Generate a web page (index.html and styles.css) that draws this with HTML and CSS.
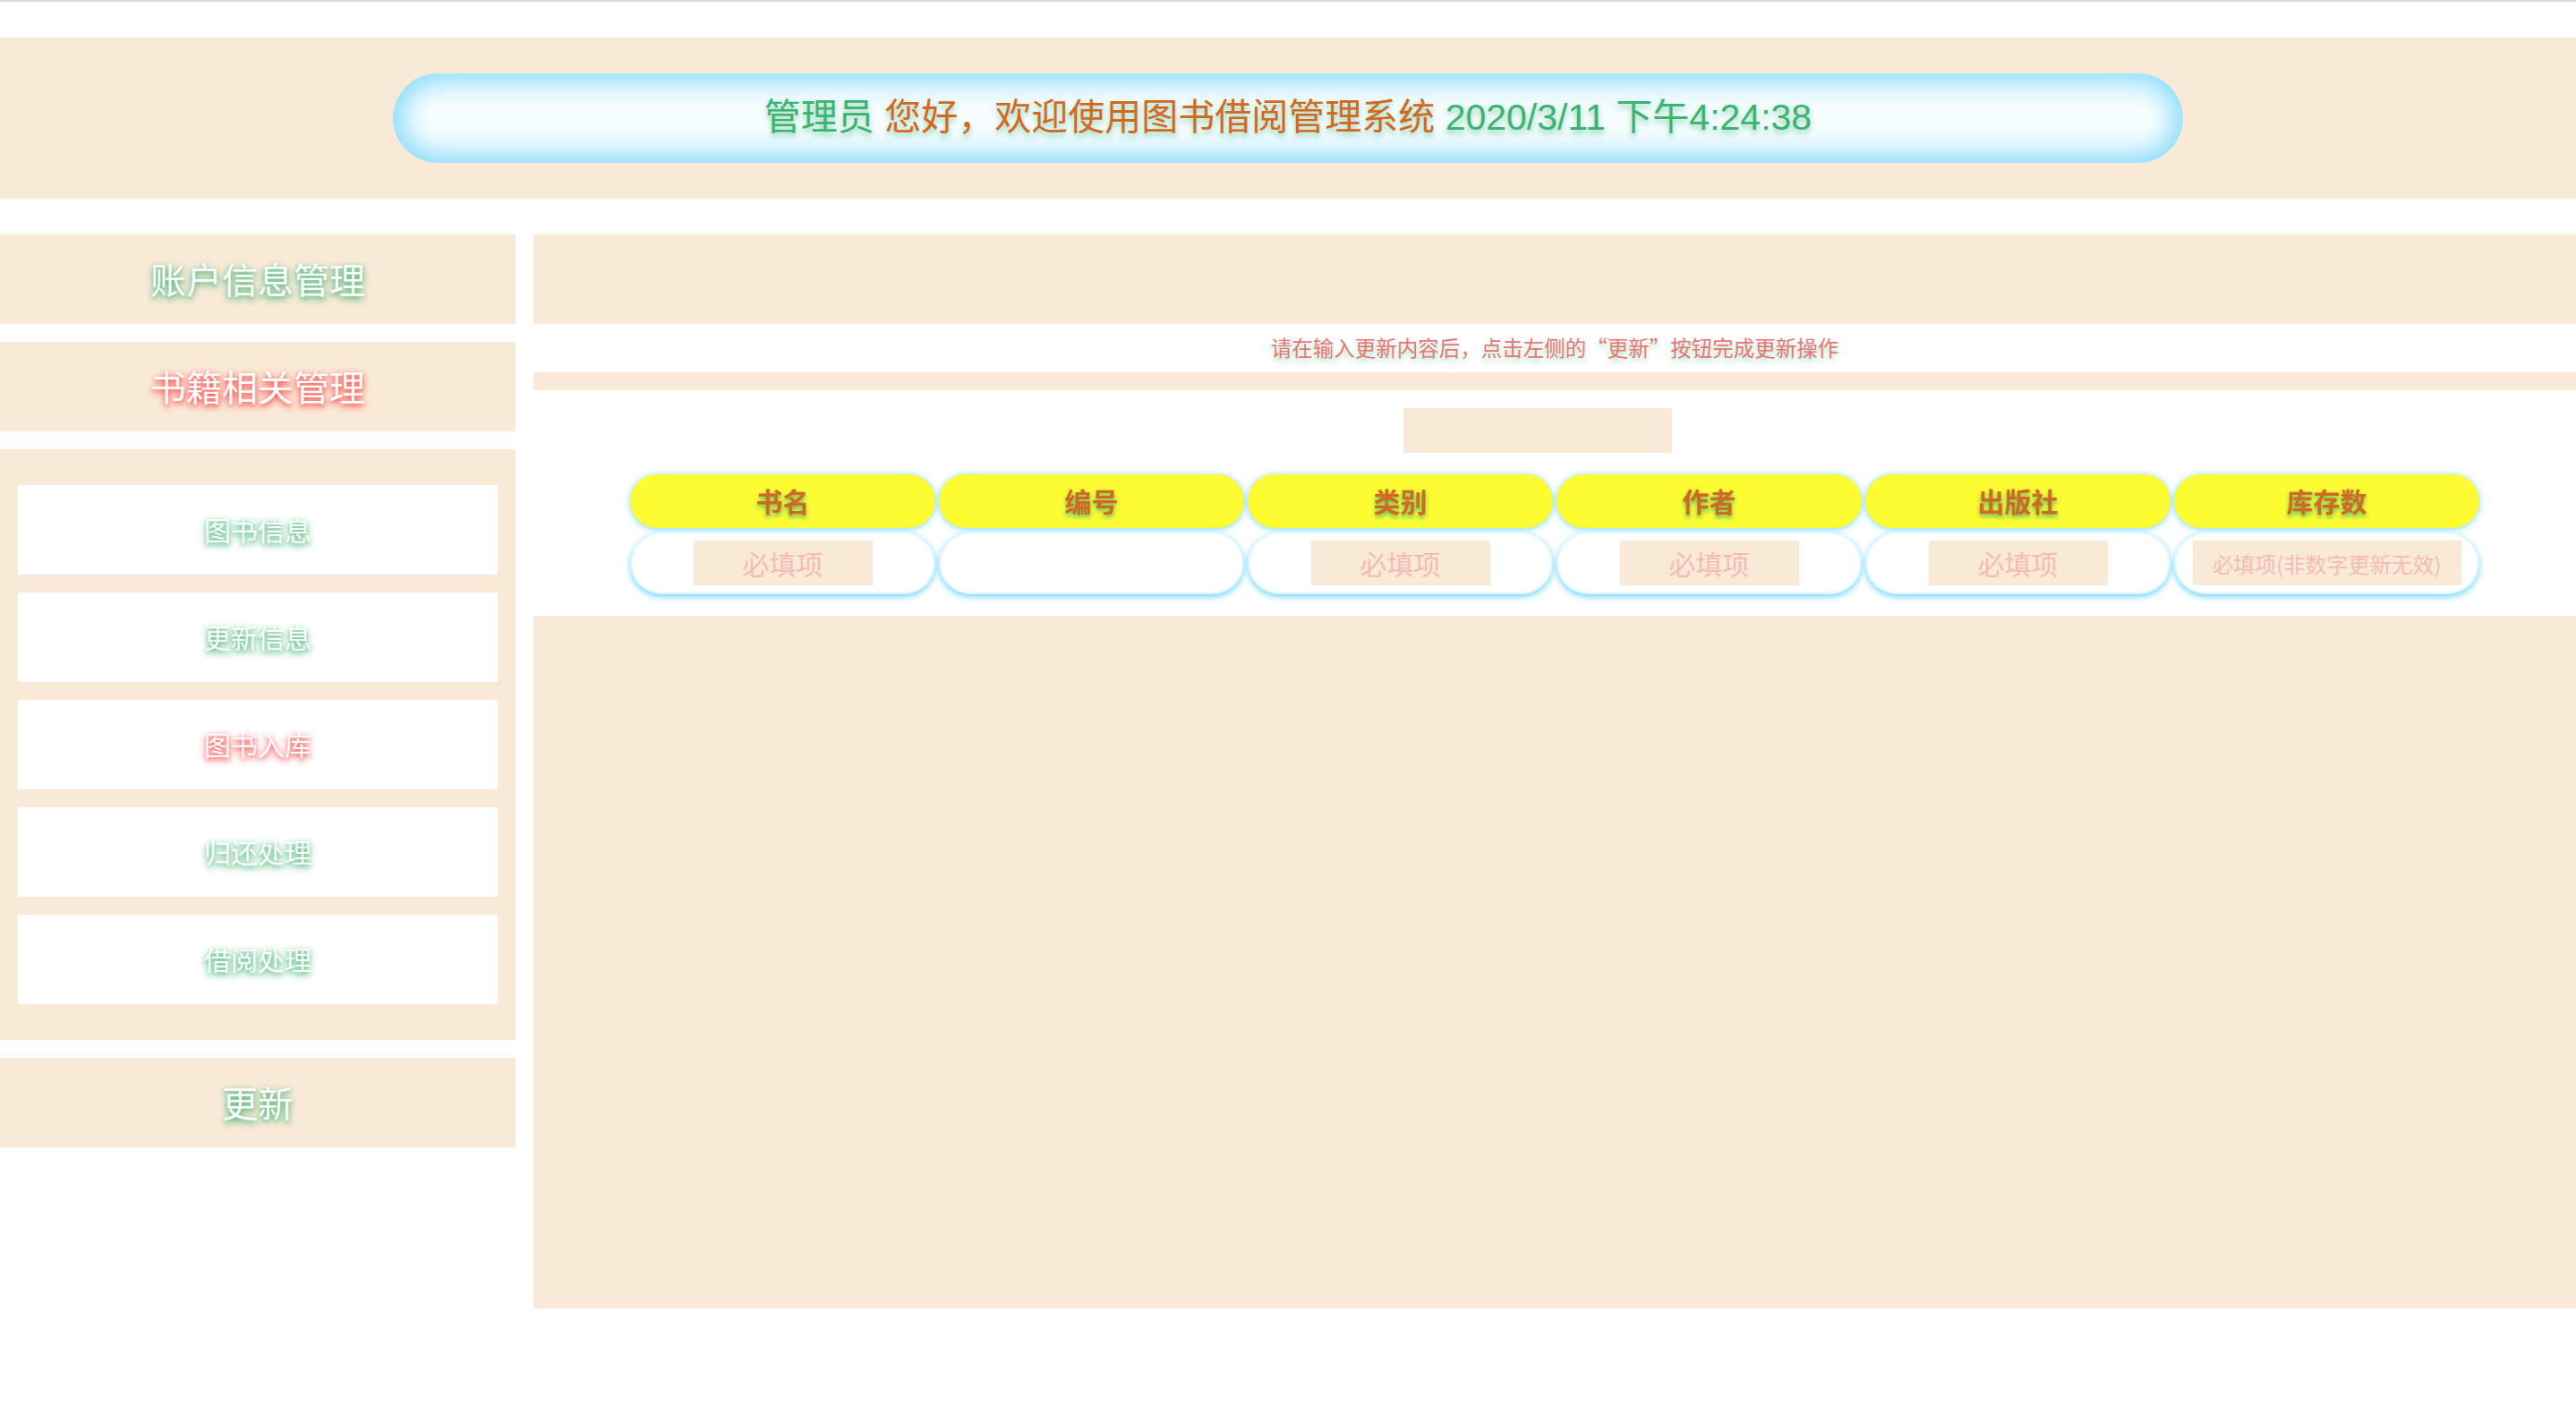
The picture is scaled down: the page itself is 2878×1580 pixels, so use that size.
FILE: index.html
```html
<!DOCTYPE html>
<html lang="zh-CN">
<head>
<meta charset="utf-8">
<title>图书借阅管理系统</title>
<link rel="stylesheet" href="styles.css">
</head>
<body>
<header class="topbar">
  <div class="welcome"><span class="green">管理员</span> <span class="orange">您好，欢迎使用图书借阅管理系统</span> <span class="green">2020/3/11 下午4:24:38</span></div>
</header>
<div class="layout">
  <aside class="sidebar">
    <div class="menu-head glow-green">账户信息管理</div>
    <div class="menu-head glow-red">书籍相关管理</div>
    <div class="submenu">
      <div class="sub-item glow-green">图书信息</div>
      <div class="sub-item glow-green">更新信息</div>
      <div class="sub-item glow-red">图书入库</div>
      <div class="sub-item glow-green">归还处理</div>
      <div class="sub-item glow-green">借阅处理</div>
    </div>
    <div class="menu-head glow-green">更新</div>
  </aside>
  <main class="content">
    <div class="blank-top"></div>
    <p class="hint">请在输入更新内容后，点击左侧的“更新”按钮完成更新操作</p>
    <div class="bar"></div>
    <div class="search-row"><input class="search" type="text"></div>
    <div class="book-grid">
      <div class="head-cell">书名</div>
      <div class="head-cell">编号</div>
      <div class="head-cell">类别</div>
      <div class="head-cell">作者</div>
      <div class="head-cell">出版社</div>
      <div class="head-cell">库存数</div>
      <div class="input-cell"><input class="field" type="text" placeholder="必填项"></div>
      <div class="input-cell"><input class="field field-plain" type="text"></div>
      <div class="input-cell"><input class="field" type="text" placeholder="必填项"></div>
      <div class="input-cell"><input class="field" type="text" placeholder="必填项"></div>
      <div class="input-cell"><input class="field" type="text" placeholder="必填项"></div>
      <div class="input-cell"><input class="field field-wide" type="text" placeholder="必填项(非数字更新无效)"></div>
    </div>
    <div class="blank-bottom"></div>
  </main>
</div>
</body>
</html>
```
FILE: styles.css
```css
* {
  box-sizing: border-box;
}

html, body {
  margin: 0;
  padding: 0;
  background: #ffffff;
}

body {
  border-top: 2px solid #dcdce2;
  font-family: "Liberation Sans", "Noto Sans CJK SC", sans-serif;
}

.topbar {
  margin-top: 40px;
  background: #f9ead8;
  padding: 40px 0;
}

.welcome {
  width: 2000px;
  height: 100px;
  margin: 0 auto;
  border-radius: 50px;
  background: #f6fdff;
  box-shadow: inset 0 0 30px 9px #86d9fa;
  text-align: center;
  line-height: 98px;
  font-size: 41px;
  white-space: pre;
  text-shadow: 0 4px 6px rgba(60, 179, 113, 0.55);
}

.green {
  color: #3cb371;
}

.orange {
  color: #d2691e;
}

.layout {
  margin-top: 40px;
  display: flex;
  gap: 20px;
}

.sidebar {
  width: 576px;
  flex: none;
  display: flex;
  flex-direction: column;
  gap: 20px;
}

.menu-head {
  height: 100px;
  background: #f9ead8;
  display: flex;
  align-items: center;
  justify-content: center;
  padding-bottom: 2px;
  color: #ffffff;
  font-size: 40px;
  font-family: "Noto Sans CJK SC", sans-serif;
}

.submenu {
  background: #f9ead8;
  padding: 40px 20px;
  display: flex;
  flex-direction: column;
  gap: 20px;
}

.sub-item {
  height: 100px;
  background: #ffffff;
  display: flex;
  align-items: center;
  justify-content: center;
  padding-bottom: 2px;
  color: #ffffff;
  font-size: 30px;
  font-family: "Noto Sans CJK SC", sans-serif;
}

.glow-green {
  text-shadow: 0 3px 8px #3cb371, 0 2px 4px rgba(60, 179, 113, 0.5);
}

.glow-red {
  text-shadow: 0 3px 8px #ff3c3c, 0 2px 4px rgba(255, 60, 60, 0.5);
}

.content {
  flex: 1;
  display: flex;
  flex-direction: column;
}

.blank-top {
  height: 100px;
  background: #f9ead8;
}

.hint {
  margin: 0;
  height: 54px;
  line-height: 52px;
  text-align: center;
  font-size: 23.5px;
  font-family: "Noto Sans CJK SC", sans-serif;
  color: #e87676;
  text-shadow: 0 4px 6px rgba(60, 179, 113, 0.45);
}

.bar {
  height: 20px;
  background: #f9ead8;
}

.search-row {
  margin-top: 20px;
  display: flex;
  justify-content: center;
}

.search {
  width: 300px;
  height: 50px;
  margin-right: 38px;
  border: none;
  outline: none;
  background: #f9ead8;
}

.book-grid {
  margin: 24px 0;
  display: grid;
  grid-template-columns: repeat(6, 341px);
  grid-template-rows: 60px 70px;
  column-gap: 4px;
  row-gap: 4px;
  justify-content: center;
}

.head-cell {
  background: #fdfc33;
  border-radius: 30px;
  box-shadow: 0 1px 7px #74d6fc;
  display: flex;
  align-items: center;
  justify-content: center;
  padding-bottom: 2px;
  font-size: 30px;
  font-weight: bold;
  font-family: "Noto Sans CJK SC", sans-serif;
  color: #d2691e;
  text-shadow: 0 3px 5px rgba(60, 179, 113, 0.85);
}

.input-cell {
  background: #ffffff;
  border-radius: 35px;
  box-shadow: 0 3px 7px #74d6fc, inset 0 0 4px #a8e6fd;
  display: flex;
  align-items: center;
  justify-content: center;
}

.field {
  width: 200px;
  height: 50px;
  border: none;
  outline: none;
  background: #f9ead8;
  text-align: center;
  font-size: 30px;
  font-family: "Noto Sans CJK SC", sans-serif;
  color: #d2691e;
  padding: 0;
}

.field::placeholder {
  color: #f7bab3;
}

.field-plain {
  background: transparent;
}

.field-wide {
  width: 300px;
  font-size: 24px;
}

.blank-bottom {
  height: 774px;
  background: #f9ead8;
}
```
